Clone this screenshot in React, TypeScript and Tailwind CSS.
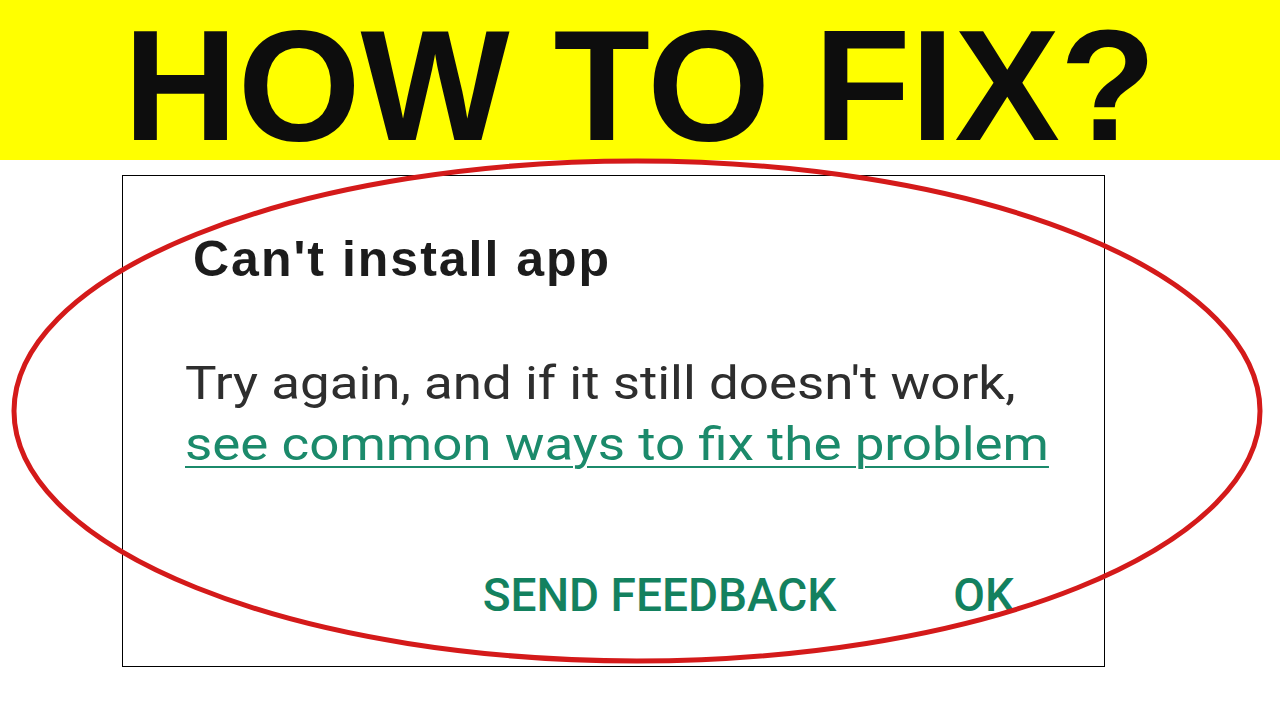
import React from 'react'

// red marker ring drawn over the dialog
function Circle() {
  return (
    <svg className="absolute inset-0 pointer-events-none" width="1280" height="720" viewBox="0 0 1280 720">
      <ellipse cx="637" cy="411" rx="623" ry="250" fill="none" stroke="#d41a1a" strokeWidth="5" />
    </svg>
  )
}

export default function App() {
  return (
    <div className="relative w-[1280px] h-[720px] bg-white overflow-hidden">
      {/* yellow title banner */}
      <div className="h-[160px] bg-[#ffff00] flex items-end justify-center">
        <h1 className="leading-[150px] text-[158px] font-bold text-[#0d0d0d] font-['Liberation_Sans',Arial,sans-serif]">
          HOW TO FIX?
        </h1>
      </div>

      {/* dialog */}
      <div className="ml-[122px] mt-[15px] w-[983px] h-[492px] border border-black bg-white flex flex-col">
        <h2 className="ml-[70px] mt-[53px] leading-[60px] text-[50px] font-bold tracking-[2px] text-[#1c1c1c] font-['Liberation_Sans',Arial,sans-serif]">
          Can't install app
        </h2>
        {/* the message is stretched wider in the screenshot */}
        <div className="ml-[62px] mt-[64px] origin-left scale-x-[1.15] text-[46px] leading-[61px] text-[#2e2e2e] font-['Roboto',sans-serif]">
          <p>Try again, and if it still doesn't work,</p>
          <p className="text-[#1b8a6b] underline underline-offset-[6px] decoration-2">
            see common ways to fix the problem
          </p>
        </div>
        <div className="mt-[93px] mr-[90px] flex justify-end gap-[117px] text-[46px] leading-[54px] font-medium text-[#13815f] font-['Roboto',sans-serif]">
          <button>SEND FEEDBACK</button>
          <button>OK</button>
        </div>
      </div>

      <Circle />
    </div>
  )
}
